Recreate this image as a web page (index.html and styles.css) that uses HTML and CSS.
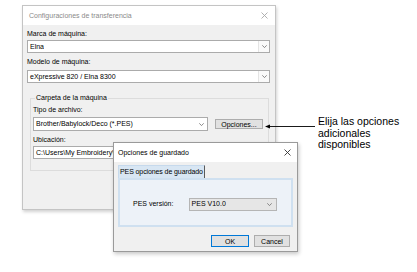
FILE: index.html
```html
<!DOCTYPE html>
<html>
<head>
<meta charset="utf-8">
<link rel="stylesheet" href="styles.css">
</head>
<body>
<div class="desk">
  <div class="win main">
    <div class="titlebar">
      <span class="title inactive">Configuraciones de transferencia</span>
      <svg class="close" width="7" height="7" viewBox="0 0 7 7"><path d="M0.5 0.5L6.5 6.5M6.5 0.5L0.5 6.5" stroke="#a8a8a8" stroke-width="0.9" fill="none"/></svg>
    </div>
    <div class="body">
      <div class="lbl first">Marca de máquina:</div>
      <div class="combo wide"><span class="val">Elna</span><span class="drop sep"><svg width="5" height="3" viewBox="0 0 5 3"><path d="M0.3 0.3L2.5 2.6L4.7 0.3" stroke="#707070" stroke-width="0.8" fill="none"/></svg></span></div>
      <div class="lbl second">Modelo de máquina:</div>
      <div class="combo wide"><span class="val">eXpressive 820 / Elna 8300</span><span class="drop sep"><svg width="5" height="3" viewBox="0 0 5 3"><path d="M0.3 0.3L2.5 2.6L4.7 0.3" stroke="#707070" stroke-width="0.8" fill="none"/></svg></span></div>
      <fieldset class="group">
        <legend>Carpeta de la máquina</legend>
        <div class="lbl">Tipo de archivo:</div>
        <div class="row">
          <div class="combo file"><span class="val">Brother/Babylock/Deco (*.PES)</span><span class="drop"><svg width="5" height="3" viewBox="0 0 5 3"><path d="M0.3 0.3L2.5 2.6L4.7 0.3" stroke="#707070" stroke-width="0.8" fill="none"/></svg></span></div>
          <div class="btn opts">Opciones...</div>
        </div>
        <div class="lbl ubic">Ubicación:</div>
        <div class="edit"><span class="path">C:\Users\My Embroidery\M</span></div>
      </fieldset>
    </div>
  </div>

  <div class="callout">
    <svg class="arrow" width="50" height="5" viewBox="0 0 50 5"><path d="M3 2.5H50" stroke="#000" stroke-width="0.9"/><path d="M0 2.5L5 0.6L5 4.4Z" fill="#000"/></svg>
    <div class="note">Elija las opciones<br>adicionales<br>disponibles</div>
  </div>

  <div class="win sub">
    <div class="titlebar">
      <span class="title">Opciones de guardado</span>
      <svg class="close" width="7" height="7" viewBox="0 0 7 7"><path d="M0.5 0.5L6.5 6.5M6.5 0.5L0.5 6.5" stroke="#333" stroke-width="0.9" fill="none"/></svg>
    </div>
    <div class="body subbody">
      <div class="tabs"><div class="tab">PES opciones de guardado</div></div>
      <div class="panel">
        <span class="plbl">PES versión:</span>
        <div class="combo ver"><span class="val">PES V10.0</span><span class="drop"><svg width="5" height="3" viewBox="0 0 5 3"><path d="M0.3 0.3L2.5 2.6L4.7 0.3" stroke="#707070" stroke-width="0.8" fill="none"/></svg></span></div>
      </div>
      <div class="buttons">
        <div class="btn ok">OK</div>
        <div class="btn cancel">Cancel</div>
      </div>
    </div>
  </div>
</div>
</body>
</html>
```

FILE: styles.css
```css
* { box-sizing: border-box; }
html, body { margin: 0; padding: 0; background: #fff; }
body { font-family: "Liberation Sans", Arial, sans-serif; font-size: 7px; color: #000; }
.desk { position: relative; width: 417px; height: 272px; overflow: hidden; }

.win { position: absolute; background: #f0f0f0; border: 1px solid #c4c4c4; display: flex; flex-direction: column; }
.main { left: 22px; top: 5px; width: 254px; height: 205px; box-shadow: 1px 2px 3px rgba(0,0,0,0.18); }
.sub { left: 113px; top: 142px; width: 185px; height: 110px; border-color: #9a9a9a; box-shadow: 1px 2px 4px rgba(0,0,0,0.22); }

.titlebar { height: 19px; background: #fff; display: flex; align-items: center; justify-content: space-between; padding: 0 7px 0 6px; flex: none; }
.sub .titlebar { padding: 0 6px 0 4px; }
.title { line-height: 10px; }
.title.inactive { color: #8a8a8a; }

.body { padding: 4px 5px 0 4px; display: flex; flex-direction: column; }
.lbl { line-height: 10px; height: 10px; }
.lbl.first { margin-bottom: 1px; }
.lbl.second { margin-top: 4px; margin-bottom: 3px; }

.combo { background: #fff; border: 1px solid #ababab; display: flex; align-items: center; justify-content: space-between; }
.combo .val { padding-left: 2px; line-height: 10px; white-space: nowrap; overflow: hidden; }
.combo .drop { display: flex; align-items: center; justify-content: center; width: 11px; height: 100%; }
.combo .drop.sep { border-left: 1px solid #e4e4e4; background: #fafafa; }
.combo.wide { height: 13px; }

.group { margin: 10px 1px 0 3px; padding: 2px 5px 11px 2px; border: 1px solid #dcdcdc; min-width: 0; }
.group legend { padding: 0 1px; margin-left: 2px; line-height: 10px; }
.row { display: flex; align-items: center; justify-content: space-between; margin-top: 2px; }
.combo.file { width: 175px; height: 14px; }
.btn { background: #e1e1e1; border: 1px solid #adadad; display: flex; align-items: center; justify-content: center; line-height: 9px; }
.opts { width: 48px; height: 10px; }
.lbl.ubic { margin-top: 4px; margin-bottom: 1px; }
.edit { background: #fff; border: 1px solid #ababab; height: 13px; line-height: 11px; padding-left: 2px; }
.edit .path { white-space: nowrap; }

.subbody { padding: 3px 4px 0 4px; }
.tabs { display: flex; }
.tab { height: 13px; background: #d8e6f3; border: 1px solid #c6d9ec; border-bottom: none; border-right: 1px solid #5a5a5a; line-height: 11px; padding: 0 1px 0 1px; white-space: nowrap; letter-spacing: -0.1px; }
.panel { height: 49px; background: #edf2f8; border: 2px solid #cfe0f0; display: flex; align-items: center; padding: 3px 14px 0 13px; }
.plbl { width: 56px; line-height: 10px; }
.combo.ver { width: 89px; height: 13px; background: #e6e6e6; border-color: #b5b5b5; }
.combo.ver .drop { width: 14px; }
.buttons { display: flex; justify-content: flex-end; gap: 5px; margin-top: 8px; padding-right: 3px; }
.ok { width: 38px; height: 12px; border-color: #0078d7; }
.cancel { width: 36px; height: 12px; }

.callout { position: absolute; left: 265px; top: 116px; display: flex; align-items: flex-start; }
.arrow { margin-top: 8px; margin-right: 3px; }
.note { font-size: 10.5px; line-height: 11.5px; color: #000; }
```
